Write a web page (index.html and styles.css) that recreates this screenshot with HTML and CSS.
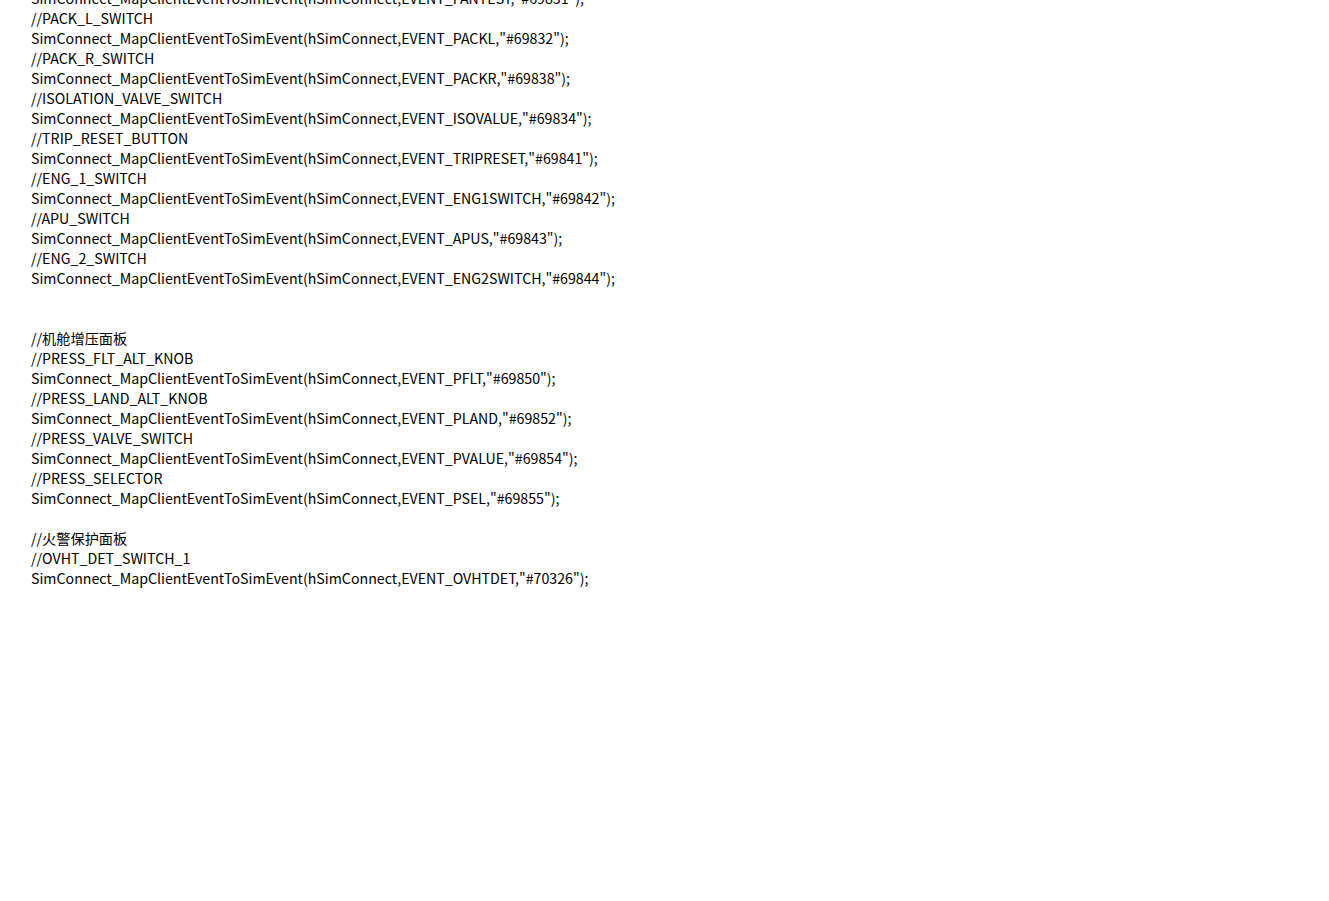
FILE: index.html
```html
<!DOCTYPE html>
<html lang="zh-CN">
<head>
    <meta charset="UTF-8">
    <title>SimConnect events</title>
    <link rel="stylesheet" href="styles.css">
</head>
<body>
    <div class="doc">SimConnect_MapClientEventToSimEvent(hSimConnect,EVENT_FANTEST,"#69831");
//PACK_L_SWITCH
SimConnect_MapClientEventToSimEvent(hSimConnect,EVENT_PACKL,"#69832");
//PACK_R_SWITCH
SimConnect_MapClientEventToSimEvent(hSimConnect,EVENT_PACKR,"#69838");
//ISOLATION_VALVE_SWITCH
SimConnect_MapClientEventToSimEvent(hSimConnect,EVENT_ISOVALUE,"#69834");
//TRIP_RESET_BUTTON
SimConnect_MapClientEventToSimEvent(hSimConnect,EVENT_TRIPRESET,"#69841");
//ENG_1_SWITCH
SimConnect_MapClientEventToSimEvent(hSimConnect,EVENT_ENG1SWITCH,"#69842");
//APU_SWITCH
SimConnect_MapClientEventToSimEvent(hSimConnect,EVENT_APUS,"#69843");
//ENG_2_SWITCH
SimConnect_MapClientEventToSimEvent(hSimConnect,EVENT_ENG2SWITCH,"#69844");


//机舱增压面板
//PRESS_FLT_ALT_KNOB
SimConnect_MapClientEventToSimEvent(hSimConnect,EVENT_PFLT,"#69850");
//PRESS_LAND_ALT_KNOB
SimConnect_MapClientEventToSimEvent(hSimConnect,EVENT_PLAND,"#69852");
//PRESS_VALVE_SWITCH
SimConnect_MapClientEventToSimEvent(hSimConnect,EVENT_PVALUE,"#69854");
//PRESS_SELECTOR
SimConnect_MapClientEventToSimEvent(hSimConnect,EVENT_PSEL,"#69855");

//火警保护面板
//OVHT_DET_SWITCH_1
SimConnect_MapClientEventToSimEvent(hSimConnect,EVENT_OVHTDET,"#70326");</div>
</body>
</html>
```

FILE: styles.css
```css
body {
    margin: 0;
    background-color: #ffffff;
    color: #000000;
}

.doc {
    margin-top: -12px;
    padding-left: 31px;
    white-space: pre;
    font-family: "Noto Sans CJK SC", "Noto Sans", sans-serif;
    font-size: 14.2px;
    line-height: 20px;
}
```
